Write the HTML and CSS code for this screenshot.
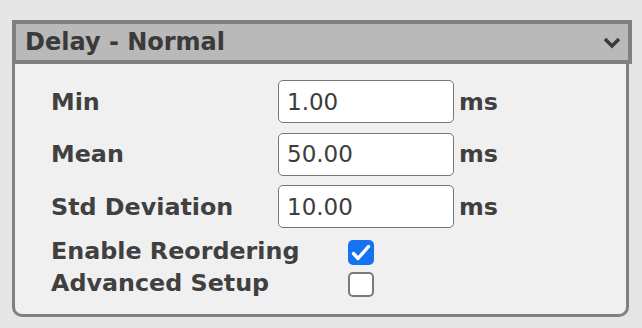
FILE: index.html
```html
<!DOCTYPE html>
<html>
<head>
  <meta charset="utf-8">
  <title>Delay - Normal</title>
  <link rel="stylesheet" href="styles.css">
</head>
<body>
<div class="panel">

  <div class="panel_head">
    <span class="panel_title">Delay - Normal</span>
    <svg class="chevron" width="18" height="12" viewBox="0 0 18 12">
      <polyline points="2,2 9,9 16,2" fill="none" stroke="#3a3a3a" stroke-width="3.5"/>
    </svg>
  </div>

  <div class="panel_body">
    <div class="fields">
      <label class="lbl">Min</label>
      <input class="num" type="text" value="1.00">
      <span class="unit">ms</span>

      <label class="lbl">Mean</label>
      <input class="num" type="text" value="50.00">
      <span class="unit">ms</span>

      <label class="lbl">Std Deviation</label>
      <input class="num" type="text" value="10.00">
      <span class="unit">ms</span>
    </div>

    <div class="checks">
      <label class="lbl">Enable Reordering</label>
      <span class="box on">
        <svg width="26" height="25" viewBox="0 0 26 25">
          <polyline points="5.5,13.5 10,18.5 20.5,6.5" fill="none" stroke="#fff" stroke-width="3.4" stroke-linecap="round" stroke-linejoin="round"/>
        </svg>
      </span>

      <label class="lbl">Advanced Setup</label>
      <span class="box"></span>
    </div>
  </div>

</div>
</body>
</html>
```

FILE: styles.css
```css
html, body {
  margin: 0;
}
body {
  background-color: #e6e6e6;
  font-family: "DejaVu Sans", Verdana, sans-serif;
  color: #404040;
  padding: 20px 0 0 12px;
}

.panel {
  width: 620px;
}

.panel_head {
  height: 36px;
  border: 4px solid #808080;
  background: #b9b9b9;
  display: flex;
  align-items: center;
  justify-content: space-between;
  padding: 0 7px 0 9px;
}
.panel_title {
  font-weight: bold;
  font-size: 24px;
  color: #3a3a3a;
}
.chevron {
  display: block;
  margin-top: 1px;
}

.panel_body {
  margin-right: 3px;
  background: #f0f0f0;
  border: 3px solid #808080;
  border-top: none;
  border-radius: 0 0 10px 10px;
  padding: 16px 0 13px 36px;
}

.lbl {
  font-weight: bold;
  font-size: 23.8px;
}

.fields {
  display: grid;
  grid-template-columns: 227px 176px auto;
  row-gap: 9.5px;
  align-items: center;
}
.num {
  box-sizing: border-box;
  width: 176px;
  height: 43px;
  margin: 0;
  border: 1.5px solid #767676;
  border-radius: 5px;
  background: #fff;
  padding: 0 0 0 8px;
  font-family: "DejaVu Sans", Verdana, sans-serif;
  font-size: 23px;
  color: #3c3c3c;
  outline: none;
}
.unit {
  font-weight: bold;
  font-size: 23.8px;
  padding-left: 5px;
}

.checks {
  margin-top: 8.5px;
  display: grid;
  grid-template-columns: 297px auto;
  grid-auto-rows: 32px;
  align-items: center;
}
.checks .lbl {
  margin-top: -4px;
}
.box {
  box-sizing: border-box;
  width: 26px;
  height: 25px;
  border: 2px solid #7a7a7a;
  border-radius: 5px;
  background: #fff;
}
.box.on {
  border: none;
  background: #1673f0;
}
.box svg {
  display: block;
}
```
